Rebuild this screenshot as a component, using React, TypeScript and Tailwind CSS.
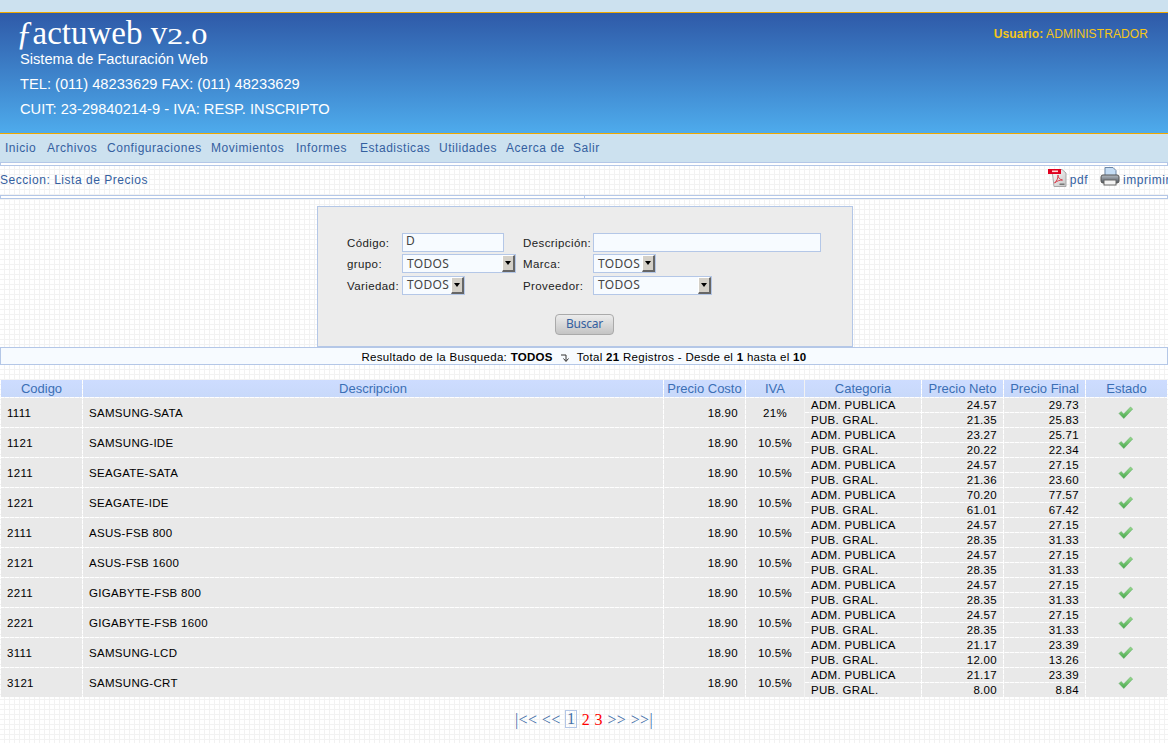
const rows = [
  { codigo: '1111', desc: 'SAMSUNG-SATA', iva: '21%', a: ['24.57', '29.73'], b: ['21.35', '25.83'] },
  { codigo: '1121', desc: 'SAMSUNG-IDE', iva: '10.5%', a: ['23.27', '25.71'], b: ['20.22', '22.34'] },
  { codigo: '1211', desc: 'SEAGATE-SATA', iva: '10.5%', a: ['24.57', '27.15'], b: ['21.36', '23.60'] },
  { codigo: '1221', desc: 'SEAGATE-IDE', iva: '10.5%', a: ['70.20', '77.57'], b: ['61.01', '67.42'] },
  { codigo: '2111', desc: 'ASUS-FSB 800', iva: '10.5%', a: ['24.57', '27.15'], b: ['28.35', '31.33'] },
  { codigo: '2121', desc: 'ASUS-FSB 1600', iva: '10.5%', a: ['24.57', '27.15'], b: ['28.35', '31.33'] },
  { codigo: '2211', desc: 'GIGABYTE-FSB 800', iva: '10.5%', a: ['24.57', '27.15'], b: ['28.35', '31.33'] },
  { codigo: '2221', desc: 'GIGABYTE-FSB 1600', iva: '10.5%', a: ['24.57', '27.15'], b: ['28.35', '31.33'] },
  { codigo: '3111', desc: 'SAMSUNG-LCD', iva: '10.5%', a: ['21.17', '23.39'], b: ['12.00', '13.26'] },
  { codigo: '3121', desc: 'SAMSUNG-CRT', iva: '10.5%', a: ['21.17', '23.39'], b: ['8.00', '8.84'] },
];

const menu = [
  { label: 'Inicio', w: 'w-[42px]' },
  { label: 'Archivos', w: 'w-[60px]' },
  { label: 'Configuraciones', w: 'w-[104px]' },
  { label: 'Movimientos', w: 'w-[85px]' },
  { label: 'Informes', w: 'w-[64px]' },
  { label: 'Estadisticas', w: 'w-[79px]' },
  { label: 'Utilidades', w: 'w-[67px]' },
  { label: 'Acerca de', w: 'w-[67px]' },
  { label: 'Salir', w: 'w-[36px]' },
];

const cols = 'grid grid-cols-[81px_580px_81px_58px_116px_81px_81px_1fr] gap-x-px';

function Check() {
  return (
    <svg width="16" height="14" viewBox="0 0 16 14" className="-ml-[1px]">
      <defs>
        <linearGradient id="chk" x1="0" y1="0" x2="0" y2="1">
          <stop offset="0" stopColor="#9bdc8f" />
          <stop offset="1" stopColor="#47a84c" />
        </linearGradient>
      </defs>
      <path d="M1 7.500 L3 5.500 L5.700 8 L12.500 1 L14.700 3 L5.800 12.500 Z" fill="url(#chk)" stroke="#5aa860" strokeWidth="0.5" />
    </svg>
  );
}

function FakeSelect({ width }: { width: string }) {
  return (
    <div className={`${width} h-[19px] border border-[#b4c7e7] bg-[#f7fbff] flex items-center justify-between pl-1 font-['Noto_Sans',sans-serif] text-[12px] text-[#444]`}>
      <span className="tracking-[0.3px]">TODOS</span>
      <span className="w-[13px] h-[17px] bg-[#d4d0c8] border-t border-l border-t-white border-l-white border-r-2 border-b-2 border-r-[#666] border-b-[#666] flex items-center justify-center">
        <span className="w-0 h-0 border-x-[3px] border-x-transparent border-t-[4px] border-t-black" />
      </span>
    </div>
  );
}

export default function App() {
  return (
    <div className="min-h-[743px] bg-white bg-[linear-gradient(transparent_4px,#f2f2f2_4px),linear-gradient(90deg,transparent_4px,#f2f2f2_4px)] bg-[size:5px_5px] font-['Liberation_Sans',Arial,sans-serif] text-[11.5px] overflow-hidden">
      <div className="h-3 bg-[#cce1ef]" />
      <div className="h-[122px] border-y border-[#f0a800] bg-gradient-to-b from-[#2f5aa8] to-[#4eabec] flex justify-between text-white">
        <div className="pl-5 pt-[2px]">
          <div className="h-[35px] font-['Liberation_Serif',serif] text-[33px] leading-[36px] -ml-[4px] whitespace-pre">
            <span className="italic">ƒ</span>actuweb v<span className="inline-block origin-left scale-x-[1.35] text-[24px] leading-[24px]">2.0</span>
          </div>
          <div className="text-[14.67px] leading-[18px]">Sistema de Facturación Web</div>
          <div className="text-[14.67px] leading-[25px] mt-[4px]">TEL: (011) 48233629 FAX: (011) 48233629</div>
          <div className="text-[14.67px] leading-[25px]">CUIT: 23-29840214-9 - IVA: RESP. INSCRIPTO</div>
        </div>
        <div className="pr-5 pt-[12px] text-[12px] tracking-[0.1px] text-[#f5c518]"><b>Usuario:</b> ADMINISTRADOR</div>
      </div>
      <div className="h-[28px] bg-[#cce1ef] flex items-center pl-[5px] text-[12px] tracking-[0.53px] text-[#34609f] whitespace-nowrap">
        {menu.map(m => <span key={m.label} className={m.w}>{m.label}</span>)}
      </div>
      <div className="h-[4px] border border-[#b4c7e7] bg-white" />
      <div className="h-[29px] pb-[2px] flex items-center justify-between text-[#34609f] text-[12px] tracking-[0.53px]">
        <span>Seccion: Lista de Precios</span>
        <div className="flex items-center whitespace-nowrap -mr-[2px]">
          <svg width="19" height="19" viewBox="0 0 19 19" className="-mt-[5px]">
            <defs>
              <linearGradient id="pg" x1="0" y1="0" x2="1" y2="1">
                <stop offset="0" stopColor="#ffffff" />
                <stop offset="1" stopColor="#c4c4c4" />
              </linearGradient>
            </defs>
            <path d="M4 1.500h10l4 3.500v13.500h-12z" fill="url(#pg)" stroke="#a9a9a9" />
            <rect x="0" y="1" width="13" height="5" fill="#e0001f" />
            <rect x="4" y="2.500" width="6" height="1.600" fill="#ffd5d5" />
            <path d="M6.500 15c3-2.500 3.500-5.500 3.500-8 0 2.500 1.500 4.500 4.500 5-3 0-5.500 1-8 3z" fill="none" stroke="#d9303f" strokeWidth="0.9" />
            <rect x="11.500" y="15.500" width="5" height="1.500" fill="#777" />
          </svg>
          <span className="ml-[3px]">pdf</span>
          <svg width="20" height="21" viewBox="0 0 20 21" className="ml-[12px] -mt-[6px]">
            <defs>
              <linearGradient id="pr" x1="0" y1="0" x2="0" y2="1">
                <stop offset="0" stopColor="#b5bcc4" />
                <stop offset="1" stopColor="#4f555c" />
              </linearGradient>
            </defs>
            <path d="M5 1.500h8l3 3v6H5z" fill="#c4dcf4" stroke="#6d86a5" />
            <rect x="1" y="9" width="18" height="8" rx="2" fill="url(#pr)" stroke="#555" />
            <rect x="4" y="14" width="12" height="5" fill="#f3f3f3" stroke="#666" />
          </svg>
          <span className="ml-[3px]">imprimir</span>
        </div>
      </div>
      <div className="h-[4px] flex">
        <div className="flex-1 border border-[#b4c7e7] bg-white" />
        <div className="flex-1 border border-l-0 border-[#b4c7e7] bg-white" />
      </div>
      <div className="w-[536px] h-[141px] ml-[317px] mt-[7px] border border-[#b4c7e7] bg-[#ececec] pl-[29px] pt-[26px] text-[11.5px] text-[#222] tracking-[0.4px]">
        <div className="grid grid-cols-[55px_121px_70px_1fr] gap-y-[2px] items-center">
          <span className="pt-[2px]">Código:</span>
          <div className="w-[102px] h-[19px] border border-[#b4c7e7] bg-[#f7fbff] pl-[3px] font-['Noto_Sans',sans-serif] text-[12px] text-[#444] leading-[14px]">D</div>
          <span className="pt-[2px]">Descripción:</span>
          <div className="w-[228px] h-[19px] border border-[#b4c7e7] bg-[#f7fbff]" />
          <span className="pt-[2px]">grupo:</span>
          <FakeSelect width="w-[114px]" />
          <span className="pt-[2px]">Marca:</span>
          <FakeSelect width="w-[63px]" />
          <span className="pt-[2px]">Variedad:</span>
          <FakeSelect width="w-[63px]" />
          <span className="pt-[2px]">Proveedor:</span>
          <FakeSelect width="w-[119px]" />
        </div>
        <div className="w-[59px] h-[21px] ml-[208px] mt-[19px] border border-[#aaa] rounded-[4px] bg-gradient-to-b from-[#ececec] to-[#c4c4c4] flex items-center justify-center font-['Noto_Sans',sans-serif] text-[12px] text-[#34609f] tracking-[-0.2px]">Buscar</div>
      </div>
      <div className="h-[18px] pt-[3px] border border-[#b4c7e7] bg-[#f7fbff] flex items-center justify-center text-[11.5px] text-black tracking-[0.3px] whitespace-pre">
        Resultado de la Busqueda: <b>TODOS</b>
        <svg width="10" height="10" viewBox="0 0 10 10" className="mx-[7px]">
          <path d="M1 2h5v6M3.500 5.500 6 8.500 8.500 5.500" fill="none" stroke="#333" strokeWidth="1" />
        </svg>
        Total <b>21</b> Registros - Desde el <b>1</b> hasta el <b>10</b>
      </div>
      <div className="mt-[15px] mx-px">
        <div className={`${cols} h-[17px] text-[13px] leading-[17px] text-center text-[#3b6fb5] mb-px`}>
          {['Codigo', 'Descripcion', 'Precio Costo', 'IVA', 'Categoria', 'Precio Neto', 'Precio Final', 'Estado'].map(h => (
            <div key={h} className="bg-gradient-to-b from-[#cddcff] to-[#c8d9fa]">{h}</div>
          ))}
        </div>
        {rows.map(r => (
          <div key={r.codigo} className={`${cols} h-[29px] mb-px text-[11.5px] text-black tracking-[0.3px] leading-[14px]`}>
            <div className="bg-[#e9e9e9] flex items-center pl-[6px]">{r.codigo}</div>
            <div className="bg-[#e9e9e9] flex items-center pl-[6px]">{r.desc}</div>
            <div className="bg-[#e9e9e9] flex items-center justify-end pr-[7px]">18.90</div>
            <div className="bg-[#e9e9e9] flex items-center justify-center">{r.iva}</div>
            <div className="grid grid-rows-2 gap-y-px">
              <div className="bg-[#e9e9e9] pl-[6px]">ADM. PUBLICA</div>
              <div className="bg-[#e9e9e9] pl-[6px]">PUB. GRAL.</div>
            </div>
            <div className="grid grid-rows-2 gap-y-px text-right">
              <div className="bg-[#e9e9e9] pr-[6px]">{r.a[0]}</div>
              <div className="bg-[#e9e9e9] pr-[6px]">{r.b[0]}</div>
            </div>
            <div className="grid grid-rows-2 gap-y-px text-right">
              <div className="bg-[#e9e9e9] pr-[6px]">{r.a[1]}</div>
              <div className="bg-[#e9e9e9] pr-[6px]">{r.b[1]}</div>
            </div>
            <div className="bg-[#e9e9e9] flex items-center justify-center"><Check /></div>
          </div>
        ))}
      </div>
      <div className="mt-[13px] flex justify-center font-['Liberation_Serif',serif] text-[16px] leading-[19px] tracking-[0.4px] text-[#3f6ea8] whitespace-pre">
        <span>|&lt;&lt; &lt;&lt; </span>
        <span className="border border-[#b4c7e7] px-[1px] h-[18px] leading-[16px]">1</span>
        <span className="text-[#f00]"> 2 3 </span>
        <span>&gt;&gt; &gt;&gt;|</span>
      </div>
    </div>
  );
}
